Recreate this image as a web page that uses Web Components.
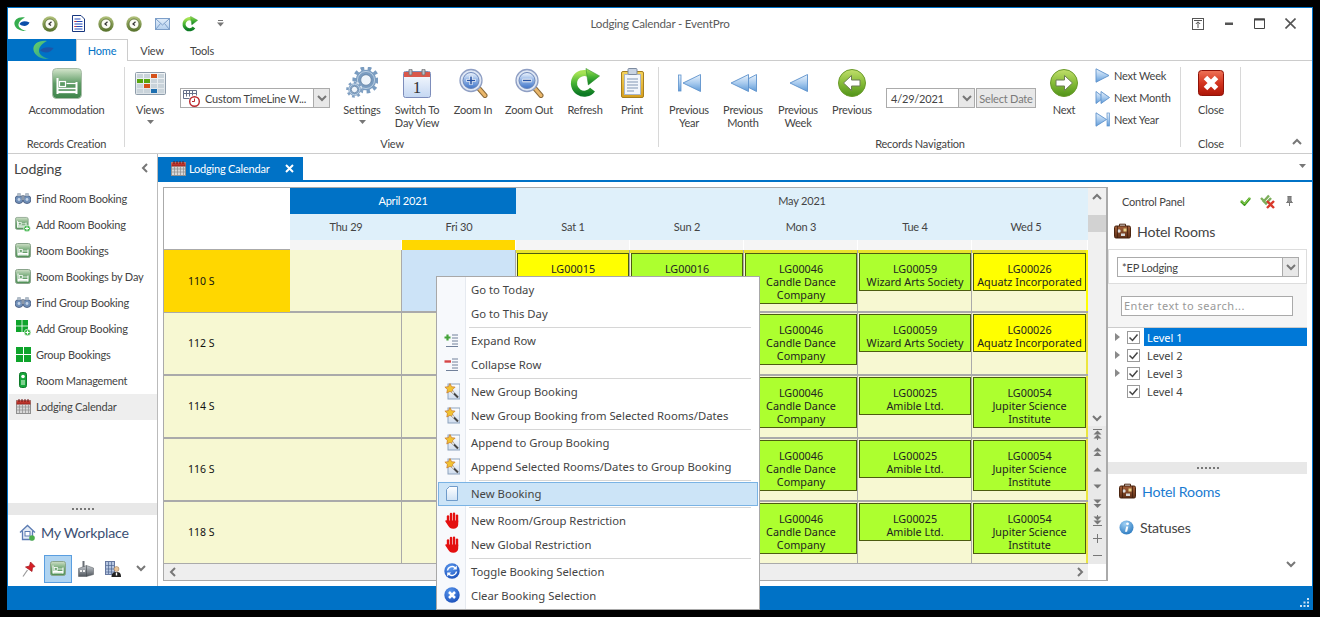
<!DOCTYPE html>
<html><head><meta charset="utf-8"><title>Lodging Calendar - EventPro</title>
<style>
html,body{margin:0;padding:0;background:#000;height:617px;overflow:hidden}
body{font:11px Lato,"Noto Sans",sans-serif;color:#444}
</style></head>
<body>
<ep-window>
  <ep-titlebar title-text="Lodging Calendar - EventPro"></ep-titlebar>
  <ep-tabs></ep-tabs>
  <ep-ribbon>
    <ep-group label="Records Creation" style="width:117px">
      <ep-rbtn icon="bed" label="Accommodation" style="width:117px"></ep-rbtn>
    </ep-group>
    <ep-group label="View" style="width:534px;padding-left:7px">
      <ep-rbtn icon="views" label="Views" arrow style="width:36px"></ep-rbtn>
      <ep-combo icon="timeline" style="width:150px;margin:21px 10px 0 12px">Custom TimeLine W...</ep-combo>
      <ep-rbtn icon="gears" label="Settings" arrow style="width:44px;margin-right:6px"></ep-rbtn>
      <ep-rbtn icon="cal1" label="Switch To|Day View" style="width:54px"></ep-rbtn>
      <ep-rbtn icon="zoomin" label="Zoom In" style="width:58px"></ep-rbtn>
      <ep-rbtn icon="zoomout" label="Zoom Out" style="width:54px"></ep-rbtn>
      <ep-rbtn icon="refresh" label="Refresh" style="width:58px"></ep-rbtn>
      <ep-rbtn icon="print" label="Print" style="width:36px"></ep-rbtn>
    </ep-group>
    <ep-group label="Records Navigation" style="width:522px;padding-left:10px">
      <ep-rbtn icon="prevyear" label="Previous|Year" style="width:40px"></ep-rbtn>
      <ep-rbtn icon="prevmonth" label="Previous|Month" style="width:68px"></ep-rbtn>
      <ep-rbtn icon="prevweek" label="Previous|Week" style="width:42px"></ep-rbtn>
      <ep-rbtn icon="prevgo" label="Previous" style="width:66px"></ep-rbtn>
      <ep-combo style="width:89px;margin:21px 1px 0 1px">4/29/2021</ep-combo>
      <ep-datebtn style="margin-top:21px">Select Date</ep-datebtn>
      <ep-rbtn icon="nextgo" label="Next" style="width:44px;margin-left:6px"></ep-rbtn>
      <ep-smallcol style="margin-left:9px">
        <ep-smallbtn icon="nextweek">Next Week</ep-smallbtn>
        <ep-smallbtn icon="nextmonth">Next Month</ep-smallbtn>
        <ep-smallbtn icon="nextyear">Next Year</ep-smallbtn>
      </ep-smallcol>
    </ep-group>
    <ep-group label="Close" style="width:60px">
      <ep-rbtn icon="closebig" label="Close" style="width:60px"></ep-rbtn>
    </ep-group>
  </ep-ribbon>
  <ep-body>
    <ep-sidebar>
      <ep-navitem icon="binoc">Find Room Booking</ep-navitem>
      <ep-navitem icon="bedplus">Add Room Booking</ep-navitem>
      <ep-navitem icon="bedsm">Room Bookings</ep-navitem>
      <ep-navitem icon="bedsm">Room Bookings by Day</ep-navitem>
      <ep-navitem icon="binoc">Find Group Booking</ep-navitem>
      <ep-navitem icon="gridplus">Add Group Booking</ep-navitem>
      <ep-navitem icon="grid">Group Bookings</ep-navitem>
      <ep-navitem icon="phone">Room Management</ep-navitem>
      <ep-navitem icon="calsm" active>Lodging Calendar</ep-navitem>
    </ep-sidebar>
    <ep-main>
      <ep-doctab>Lodging Calendar</ep-doctab>
      <ep-workspace>
        <ep-calendar></ep-calendar>
        <ep-panel></ep-panel>
      </ep-workspace>
    </ep-main>
  </ep-body>
  <ep-status></ep-status>
  <ep-menu>
    <ep-mitem>Go to Today</ep-mitem>
    <ep-mitem>Go to This Day</ep-mitem>
    <ep-msep></ep-msep>
    <ep-mitem icon="expand">Expand Row</ep-mitem>
    <ep-mitem icon="collapse">Collapse Row</ep-mitem>
    <ep-msep></ep-msep>
    <ep-mitem icon="wand">New Group Booking</ep-mitem>
    <ep-mitem icon="wand">New Group Booking from Selected Rooms/Dates</ep-mitem>
    <ep-msep></ep-msep>
    <ep-mitem icon="wand">Append to Group Booking</ep-mitem>
    <ep-mitem icon="wand">Append Selected Rooms/Dates to Group Booking</ep-mitem>
    <ep-msep></ep-msep>
    <ep-mitem icon="page" active>New Booking</ep-mitem>
    <ep-msep></ep-msep>
    <ep-mitem icon="hand">New Room/Group Restriction</ep-mitem>
    <ep-mitem icon="hand">New Global Restriction</ep-mitem>
    <ep-msep></ep-msep>
    <ep-mitem icon="toggle">Toggle Booking Selection</ep-mitem>
    <ep-mitem icon="clear">Clear Booking Selection</ep-mitem>
  </ep-menu>
</ep-window>
<script>
const lg=(id,a,b,c)=>`<defs><linearGradient id="${id}" x1="0" y1="0" x2="0" y2="1"><stop offset="0" stop-color="${a}"/>${c?`<stop offset=".5" stop-color="${c}"/>`:''}<stop offset="1" stop-color="${b}"/></linearGradient></defs>`;
const bedGlyph=`<path d="M5.500 10v16M24.500 14v12" stroke="#fff" stroke-width="2" fill="none"/><path d="M5.500 20.500h19" stroke="#fff" stroke-width="1.500"/><path d="M5.500 24h19" stroke="#fff" stroke-width="2.400"/><rect x="7.500" y="13.500" width="6" height="5" fill="none" stroke="#fff" stroke-width="1.200"/><path d="M14.500 15.500h10" stroke="#fff" stroke-width="1.200"/>`;
const tri=(pts,g='t')=>`<path d="${pts}" fill="url(#${g})" stroke="#5d92cc" stroke-width=".9" stroke-linejoin="round"/>`;
const triG=lg('t','#eaf3fc','#5f9bd8','#a9cbee');
const gear=(cx,cy,r,c,tw,hi)=>`<circle cx="${cx}" cy="${cy}" r="${r*1.22}" fill="none" stroke="${c}" stroke-width="${r*.42}" stroke-dasharray="${tw} ${tw}"/><circle cx="${cx}" cy="${cy}" r="${r*.82}" fill="none" stroke="${c}" stroke-width="${r*.52}"/><circle cx="${cx}" cy="${cy}" r="${r*.56}" fill="#eef4fa" stroke="#55779c" stroke-width=".8"/><circle cx="${cx}" cy="${cy}" r="${r*.9}" fill="none" stroke="${hi}" stroke-width=".8"/>`;
const clock=`${lg('c','#b4c47e','#55702a')}<circle cx="8" cy="8" r="7.700" fill="url(#c)"/><circle cx="8" cy="8" r="5" fill="#fbfbf4" stroke="#4e6322" stroke-width=".7"/><path d="M9.500 5.800 7 8l2 1.400" stroke="#333" stroke-width="1.200" fill="none"/>`;
const refresh=`${lg('r','#a6e354','#0d7a24','#46b334')}<path d="M24 23a11 11 0 1 1-4-16.500" fill="none" stroke="url(#r)" stroke-width="6.500"/><path d="M17 .5 31.500 8.500 19.500 18z" fill="url(#r)" stroke="#2b8b28" stroke-width=".6"/>`;
const mag=(inner)=>`${lg('m','#f0f6fd','#3f74c8','#8db0e4')}<path d="M20.500 20 27 27.500" stroke="#8a6a3a" stroke-width="5" stroke-linecap="round"/><path d="M20.500 20 27 27.500" stroke="#eab76b" stroke-width="3" stroke-linecap="round"/><circle cx="13" cy="12.500" r="11" fill="#dfe7f4" stroke="#8f9fc4" stroke-width="1.300"/><circle cx="13" cy="12.500" r="8" fill="url(#m)" stroke="#6d88bb"/>${inner}`;
const wand=`${lg('w','#ffffff','#cfdcee')}<rect x="4" y="1" width="12" height="15" fill="url(#w)" stroke="#8ea3bd"/><path d="M6 .5l1.600 3.200 3.500.4-2.500 2.500.6 3.500-3.200-1.700L2.800 10l.6-3.500L.9 4.100l3.500-.4z" fill="#f1c232" stroke="#c8772a" stroke-width=".7"/><path d="M8 8.500 14 14.500" stroke="#444" stroke-width="2"/><path d="M8 8.500 10 10.500" stroke="#ddd" stroke-width="2"/>`;
const sgrid=`<rect x="0" y="0" width="7" height="7" fill="#0ea42b"/><rect x="8" y="0" width="7" height="7" fill="#0ea42b"/><rect x="0" y="8" width="7" height="7" fill="#0ea42b"/><rect x="8" y="8" width="7" height="7" fill="#0ea42b"/>`;
const bedsm=`${lg('b','#cfe0c8','#4f8f55','#6fa673')}<rect x=".5" y=".5" width="15" height="14" rx="2" fill="url(#b)" stroke="#8aa48c"/><path d="M3 4.500v8M13 6.500v6M3 10.500h10" stroke="#fff" stroke-width="1.100" fill="none"/><path d="M3 11.800h10" stroke="#fff" stroke-width="1.300"/><rect x="4.300" y="6.500" width="3" height="2.800" fill="none" stroke="#fff" stroke-width=".8"/><path d="M7.500 8h5.500" stroke="#fff" stroke-width=".8"/>`;
const calsm=`${lg('k','#d94b3f','#9d1f1a')}<rect x=".5" y="1.500" width="14" height="13" fill="#d8d8d8" stroke="#8f8f8f"/><rect x=".5" y="1.500" width="14" height="4" fill="url(#k)"/><path d="M3 0v3M6 0v3M9 0v3M12 0v3" stroke="#6b1010"/><path d="M3.500 5v9M6.500 5v9M9.500 5v9M12.500 5v9M1 8h13M1 11h13" stroke="#8c8c8c" stroke-width=".7"/>`;
const plusDot=(x,y)=>`<circle cx="${x}" cy="${y}" r="3.300" fill="#3fb54a" stroke="#fff" stroke-width=".6"/><path d="M${x-2} ${y}h4M${x} ${y-2}v4" stroke="#fff" stroke-width="1.100"/>`;
const ICONS={
 logo:[17,16,`<path d="M12 1.500C6 0 .5 3.500 1.500 8.500 2.500 13 8 15.500 13.500 15 8 13.500 5 11 5.500 8c.5-3 3.500-5 6.500-6.500z" fill="#36ad4e"/><path d="M6.500 8C8.500 4.500 12.500 4.500 16.500 6.500 15 10 10.500 11.500 6.500 8z" fill="#0b4fa8"/>`],
 applogo:[22,20,`<defs><linearGradient id="a" x1="0" y1="0" x2="1" y2="1"><stop offset="0" stop-color="#6fd060"/><stop offset="1" stop-color="#1f9ea0"/></linearGradient></defs><path d="M15 1C7 0 .5 4 1.500 10 2.500 16 10 19.500 17 19 10 17 6.500 14 7 10c.5-4 4-7 8-9z" fill="url(#a)"/><path d="M8 10.500C11 7 16 6.500 21.500 8 19.500 12.500 13 14 8 10.500z" fill="#1c55a8"/>`],
 clock:[16,16,clock],
 doc:[13,17,`<path d="M.5.5h8.500L12.500 4v12.500H.5z" fill="#fff" stroke="#17367f"/><path d="M2.500 4h6M2.500 6.500h8M2.500 9h8M2.500 11.500h8M2.500 14h8" stroke="#2349b8"/><path d="M2.500 6.500h2M2.500 11.500h2" stroke="#d33"/>`],
 env:[15,12,`${lg('e','#e3eefa','#b5d0ee')}<rect x=".5" y=".5" width="14" height="11" fill="url(#e)" stroke="#7d9fc9"/><path d="M1 1l6.500 6L14 1M1 11l4.500-5.500M14 11 9.500 5.500" fill="none" stroke="#7d9fc9"/>`],
 refreshsm:[16,16,refresh,32,32],
 refresh:[30,30,refresh,32,32],
 bed:[30,31,`${lg('b','#d5e6cd','#3f854b','#5f9c66')}<rect x=".5" y=".5" width="29" height="30" rx="4" fill="url(#b)" stroke="#a8bda8"/>${bedGlyph}`],
 views:[31,23,`${lg('v','#f2f5f7','#dbe2e7')}<rect x=".5" y=".5" width="30" height="22" rx="1" fill="url(#v)" stroke="#8f9dab"/>`+[['#c9d3da','#c9d3da','#d5511a','#c9d3da'],['#58a50f','#58a50f','#c9d3da','#c9d3da'],['#c9d3da','#d5511a','#c9d3da','#c9d3da'],['#c9d3da','#c9d3da','#1e6fb0','#c9d3da']].map((r,y)=>r.map((c,x)=>`<rect x="${2+x*7}" y="${2+y*5}" width="6" height="4" fill="${c}"/>`).join('')).join('')],
 timeline:[17,17,`<path d="M.5.5h13M.5 3.500h13M.5.5v8h6M13.500.5v5M3.500.5v6M6.500.5v6M9.500.5v5" stroke="#66708a" fill="none"/><circle cx="11.500" cy="11.500" r="4.800" fill="#fff" stroke="#b9262b" stroke-width="1.400"/><path d="M11.500 8.500v3h-2.500" fill="none" stroke="#b9262b"/>`],
 gears:[32,32,`${gear(20,13,9.500,'#7a9cc0',3.500,'#c9daea')}<circle cx="8.500" cy="22.500" r="8" fill="#fff" opacity=".6"/>${gear(8.500,22.500,5.800,'#7f9fc2',2.700,'#c9daea')}`],
 cal1:[28,29,`${lg('k','#fafcff','#c4d7f2')}<rect x=".5" y="2.500" width="27" height="26" rx="2" fill="url(#k)" stroke="#7d8dbb"/><rect x="1" y="3" width="26" height="5" fill="#d9574b"/><rect x="6" y="0" width="3" height="6" rx="1" fill="#b9c0cc" stroke="#777"/><rect x="19" y="0" width="3" height="6" rx="1" fill="#b9c0cc" stroke="#777"/><text x="14" y="24" text-anchor="middle" font-family="Liberation Serif,serif" font-size="17" fill="#333">1</text>`],
 zoomin:[30,30,mag(`<path d="M13 8v9M8.500 12.500h9" stroke="#fff" stroke-width="3"/><path d="M13 8.500v8M9 12.500h8" stroke="#2a55a5" stroke-width="1.600"/>`)],
 zoomout:[30,30,mag(`<path d="M8.500 12.500h9" stroke="#fff" stroke-width="3.500"/><path d="M9 12.500h8" stroke="#2a55a5" stroke-width="1.600"/>`)],
 print:[23,30,`${lg('p','#f5d35b','#d69e1c')}<rect x=".5" y="3.500" width="22" height="26" rx="1.500" fill="url(#p)" stroke="#a57e20"/><rect x="3.500" y="6.500" width="16" height="20" fill="#f2f6fc" stroke="#aab5c8"/><path d="M6 11h11M6 14h11M6 17h11M6 20h11M6 23h7" stroke="#8095b3"/><rect x="7" y=".5" width="9" height="6" rx="1" fill="#c8d3e2" stroke="#7d8ba0"/>`],
 prevyear:[23,18,`${triG}<rect x=".5" y="1" width="2.500" height="16" fill="url(#t)" stroke="#5d92cc" stroke-width=".8"/>`+tri('M22.500.5 5 9l17.500 8.500z')],
 prevmonth:[27,18,`${triG}`+tri('M26.500.5 10 9l16.500 8.500z')+tri('M18.500.5 1 9l17.500 8.500z')],
 prevweek:[19,18,`${triG}`+tri('M18.500.5 1 9l17.500 8.500z')],
 prevgo:[28,28,`${lg('g','#c2df6c','#4f9218','#86bc38')}<circle cx="14" cy="14" r="13.500" fill="url(#g)" stroke="#6a9a2b"/><path d="M5.500 14 13.500 6.500V11h8.500v6h-8.500v4.500z" fill="#fff" stroke="#6d7d55"/>`],
 nextgo:[28,28,`${lg('g','#c2df6c','#4f9218','#86bc38')}<circle cx="14" cy="14" r="13.500" fill="url(#g)" stroke="#6a9a2b"/><path d="M22.500 14 14.500 6.500V11H6v6h8.500v4.500z" fill="#fff" stroke="#6d7d55"/>`],
 nextweek:[15,15,`${triG}`+tri('M1 .8 14 7.500 1 14.200z')],
 nextmonth:[15,15,`${triG}`+tri('M1 1.500 9 7.500 1 13.500z')+tri('M6 1.500 14.500 7.500 6 13.500z')],
 nextyear:[15,15,`${triG}`+tri('M1 .8 11.500 7.500 1 14.200z')+`<rect x="12" y="1" width="2.400" height="13" fill="url(#t)" stroke="#5d92cc" stroke-width=".7"/>`],
 closebig:[26,26,`${lg('x','#ee7357','#ac1507','#d43520')}<rect x=".5" y=".5" width="25" height="25" rx="3" fill="url(#x)" stroke="#8f1208"/><path d="M7.500 7.500l11 11M18.500 7.500l-11 11" stroke="#fff" stroke-width="5"/>`],
 binoc:[16,12,`<circle cx="4" cy="7.500" r="4" fill="#6f8fb8" stroke="#54688a"/><circle cx="12" cy="7.500" r="4" fill="#6f8fb8" stroke="#54688a"/><rect x="6.500" y="3" width="3" height="5" fill="#8c98a8"/><rect x="2" y="1" width="4" height="3" rx="1" fill="#b1bcc8"/><rect x="10" y="1" width="4" height="3" rx="1" fill="#b1bcc8"/><circle cx="4" cy="7.500" r="1.400" fill="#c4d4e8"/><circle cx="12" cy="7.500" r="1.400" fill="#c4d4e8"/>`],
 bedsm:[16,15,bedsm],
 bedplus:[16,16,`<g transform="translate(0 1) scale(.85)">${bedsm}</g>${plusDot(12,12.500)}`],
 grid:[15,15,sgrid],
 gridplus:[15,16,`<g transform="scale(.8)">${sgrid}</g>${plusDot(11.500,12.500)}`],
 phone:[8,16,`<rect x=".5" y=".5" width="7" height="15" rx="2" fill="#16a63a" stroke="#0f7a2a"/><circle cx="4" cy="4.500" r="1.800" fill="#fff"/><rect x="2" y="8" width="4" height="5" fill="#7ed08f"/>`],
 calsm:[15,15,calsm],
 home:[17,17,`<path d="M1 8.500 8.500 1.500 16 8.500M3.500 7v8.500h10V7" fill="#e4ecf7" stroke="#5c7cb2" stroke-width="1.300"/><rect x="6" y="7.500" width="5" height="4.500" fill="#fff" stroke="#5c7cb2"/><circle cx="13" cy="14" r="2.800" fill="#4cae4c"/>`],
 pin:[14,16,`<path d="M1 15.500 5.500 9" stroke="#999" stroke-width="1.200"/><path d="M8.500 1 13 5.500 10.500 6.500 10 10.500 3.500 6 7.500 5z" fill="#d81f26" stroke="#9c1218" stroke-width=".7"/>`],
 bedtool:[16,15,bedsm],
 factory:[16,16,`${lg('f','#c6cbd0','#4f555c')}<path d="M.5 15.500V7.500l8-3 7 2.500v6.500l-7 2z" fill="url(#f)" stroke="#50555b" stroke-width=".5"/><path d="M8.500 4.500v11" stroke="#3f444a" stroke-width=".6"/><rect x="4.500" y="0" width="2" height="6" fill="#6b7076"/><rect x="2" y="9" width="2" height="2" fill="#eee"/><rect x="5" y="9" width="2" height="2" fill="#eee"/>`],
 building:[16,16,`<rect x=".5" y=".5" width="9" height="13" fill="#b5c5e0" stroke="#6678a0"/><path d="M3.500 1v12M6.500 1v12M1 4.500h8M1 8h8M1 11h8" stroke="#4f6590" stroke-width=".7"/><circle cx="11.500" cy="8" r="2.500" fill="#e8c49a" stroke="#775533" stroke-width=".4"/><path d="M6.500 16c0-4 2-5 5-5s4.500 1 4.500 5z" fill="#222"/><path d="M10.800 11.500h1.400v3h-1.400z" fill="#fff"/>`],
 suitcase:[17,16,`${lg('s','#a5613a','#5c2e16')}<rect x=".5" y="3" width="16" height="12" rx="1.500" fill="url(#s)" stroke="#4a2510"/><path d="M5.500 3V1.200h6V3" fill="none" stroke="#4a2510"/><circle cx="5" cy="8" r="1.700" fill="#ddd"/><rect x="9.500" y="5.500" width="3" height="3" fill="#e8d48a"/><rect x="7" y="10.500" width="4" height="2.500" fill="#d8d8d8"/><path d="M3.500 3v12M13.500 3v12" stroke="#3a1b0a" stroke-width=".7"/>`],
 info:[15,15,`<defs><radialGradient id="i" cx=".4" cy=".25" r=".9"><stop offset="0" stop-color="#9fd0f4"/><stop offset="1" stop-color="#1a6db8"/></radialGradient></defs><circle cx="7.500" cy="7.500" r="7" fill="url(#i)"/><circle cx="8.500" cy="3.800" r="1.400" fill="#fff"/><path d="M7.200 6.500h2.100L8.100 11.800H6z" fill="#fff"/>`],
 check:[11,10,`<path d="M1 5l3.500 3.500L10 2" fill="none" stroke="#3f9b1e" stroke-width="2.600"/><path d="M1 4.500l3.500 3.500L10 1.500" fill="none" stroke="#a9de5f" stroke-width=".9"/>`],
 checkx:[16,15,`<path d="M1 4l3 3L9 1.500" fill="none" stroke="#7cae5a" stroke-width="2.400"/><path d="M3 6.500l3 3L11 4" fill="none" stroke="#7cae5a" stroke-width="2.400"/><path d="M7 7l7 7M14 7l-7 7" stroke="#d8392b" stroke-width="2.400"/>`],
 tack:[7,10,`<path d="M1.500.5h4M2 .5v4.500L.5 6.500h6L5 5V.5M3.500 6.500v3.500" fill="#8a8a8a" stroke="#777"/>`],
 expand:[15,14,`<path d="M8 2h6M8 5h6M8 8h6M8 11h6M2 13.500h12" stroke="#71809a"/><path d="M.5 4.500h6M3.500 1.500v6" stroke="#45a33a" stroke-width="2.200"/>`],
 collapse:[15,14,`<path d="M8 2h6M8 5h6M8 8h6M8 11h6M2 13.500h12" stroke="#71809a"/><path d="M.5 4.500h6.500" stroke="#d64545" stroke-width="2.400"/>`],
 wand:[16,17,wand],
 page:[12,15,`${lg('p','#ffffff','#cfe2f5')}<path d="M3.500.5h8v14H.5V3.500z" fill="url(#p)" stroke="#6f9bca"/>`],
 hand:[14,17,`<g stroke="#e41010" stroke-linecap="round" fill="none"><path d="M3 10V4.500" stroke-width="2.400"/><path d="M6 9V2" stroke-width="2.400"/><path d="M9 9V1.800" stroke-width="2.400"/><path d="M12 10V3.600" stroke-width="2.400"/></g><path d="M2 8.500h11.200v4c0 2.500-2 4.300-5 4.300-2.500 0-3.800-1-5-3L.4 9.500c-.4-1.200 1-1.800 1.600-1z" fill="#e41010"/>`],
 toggle:[16,16,`<defs><radialGradient id="o" cx=".4" cy=".3" r=".9"><stop offset="0" stop-color="#5d9bf0"/><stop offset="1" stop-color="#0b3fae"/></radialGradient></defs><circle cx="8" cy="8" r="7.700" fill="url(#o)"/><path d="M3.500 7.500A4.500 4.500 0 0 1 11 4.800M12.500 8.500A4.500 4.500 0 0 1 5 11.200" fill="none" stroke="#fff" stroke-width="1.500"/><path d="M12.800 2.500v4h-4zM3.200 13.500v-4h4z" fill="#fff"/>`],
 clear:[16,16,`<defs><radialGradient id="o" cx=".4" cy=".3" r=".9"><stop offset="0" stop-color="#5d9bf0"/><stop offset="1" stop-color="#0b3fae"/></radialGradient></defs><circle cx="8" cy="8" r="7.700" fill="url(#o)"/><path d="M5 5l6 6M11 5l-6 6" stroke="#fff" stroke-width="2.500"/>`],
 chevd:[10,7,`<path d="M1 1l4 4 4-4" fill="none" stroke="#777" stroke-width="2"/>`],
 chevu:[10,7,`<path d="M1 6l4-4 4 4" fill="none" stroke="#777" stroke-width="2"/>`],
 chevl:[7,10,`<path d="M6 1 2 5l4 4" fill="none" stroke="#777" stroke-width="2"/>`],
 chevr:[7,10,`<path d="M1 1l4 4-4 4" fill="none" stroke="#777" stroke-width="2"/>`],
 drop:[7,4,`<path d="M0 0h7L3.500 4z" fill="#777"/>`],
 qdrop:[7,7,`<path d="M1 .5h5" stroke="#777"/><path d="M0 2.500h7L3.500 6.500z" fill="#777"/>`],
 up2:[9,11,`<path d="M0 .5h9" stroke="#777"/><path d="M4.500 1.500 8.500 5.500h-8zM4.500 5.500 8.500 9.500h-8z" fill="#777"/><path d="M4.500 9v2" stroke="#777"/>`],
 up1:[9,10,`<path d="M4.500 .5 8.500 4.500h-8zM4.500 5 8.500 9h-8z" fill="#777"/>`],
 up0:[9,5,`<path d="M4.500 .5 8.500 4.500h-8z" fill="#777"/>`],
 dn0:[9,5,`<path d="M.5.5h8L4.500 4.500z" fill="#777"/>`],
 dn1:[9,10,`<path d="M.5.500h8L4.500 4.500zM.5 5h8L4.500 9z" fill="#777"/>`],
 dn2:[9,11,`<path d="M4.500 0v2" stroke="#777"/><path d="M.5 1.500h8L4.500 5.500zM.5 5.500h8L4.500 9.500z" fill="#777"/><path d="M0 10.500h9" stroke="#777"/>`],
 plus:[9,9,`<path d="M4.500 0v9M0 4.500h9" stroke="#777"/>`],
 minus:[9,9,`<path d="M0 4.500h9" stroke="#777"/>`],
 wrestore:[12,12,`<rect x=".5" y=".5" width="11" height="11" fill="none" stroke="#555"/><path d="M2 2.500h8M6 10V4M3.800 6 6 3.800 8.200 6" fill="none" stroke="#555"/>`],
 wmin:[8,3,`<rect width="8" height="2.500" y=".5" fill="#555"/>`],
 wmax:[11,11,`<path d="M.5 1h10v9.500H.5z" fill="none" stroke="#444"/><path d="M0 1.500h11" stroke="#444" stroke-width="2"/>`],
 wclose:[11,11,`<path d="M.5.5l10 10M10.500.5l-10 10" stroke="#555" stroke-width="1.600"/>`],
 tabx:[9,9,`<path d="M1 1l7 7M8 1 1 8" stroke="#fff" stroke-width="2"/>`],
 grip:[10,10,`<g fill="#cfe3f5"><rect x="7" y="0" width="2" height="2"/><rect x="3.500" y="3.500" width="2" height="2"/><rect x="7" y="3.500" width="2" height="2"/><rect x="0" y="7" width="2" height="2"/><rect x="3.500" y="7" width="2" height="2"/><rect x="7" y="7" width="2" height="2"/></g>`],
 expander:[5,8,`<path d="M0 0l5 4-5 4z" fill="#8a8a8a"/>`],
 checkbox:[13,13,`<rect x=".5" y=".5" width="12" height="12" fill="#fff" stroke="#9a9a9a"/><path d="M2.500 6.500 5.500 9.500 10.500 3.500" fill="none" stroke="#444" stroke-width="1.500"/>`],
};
const BASE=`*,:host{box-sizing:border-box}`;
const TAH=`"Noto Sans","Open Sans",sans-serif`;
function def(tag,css,render){
  customElements.define(tag,class extends HTMLElement{
    connectedCallback(){
      if(this.shadowRoot)return;
      const s=this.attachShadow({mode:'open'});
      s.innerHTML=`<style>${BASE}${css}</style>`+render(this);
    }
  });
}
const ic=(n,st='')=>`<ep-icon name="${n}"${st?` style="${st}"`:''}></ep-icon>`;
def('ep-icon',`:host{display:inline-flex;flex:none;line-height:0}svg{display:block}`,el=>{
  const d=ICONS[el.getAttribute('name')]||[1,1,''];
  const vw=d[3]||d[0],vh=d[4]||d[1];
  return `<svg xmlns="http://www.w3.org/2000/svg" width="${d[0]}" height="${d[1]}" viewBox="0 0 ${vw} ${vh}">${d[2]}</svg>`;
});
def('ep-window',`:host{position:absolute;left:7px;top:7px;width:1306px;height:603px;display:grid;grid-template-rows:31px 22px 93px 432px 24px;background:#fff;border:solid #0072c6;border-width:1px 1px 0 1px;font:11px Lato,"Noto Sans",sans-serif;letter-spacing:-.2px;color:#444}`,()=>`<slot></slot>`);
def('ep-titlebar',`:host{display:grid;grid-template-columns:1fr auto 1fr;align-items:center;background:#fff}
 .l,.r{display:flex;align-items:center}.l{padding-left:5px}.r{justify-content:flex-end;padding-right:6px}
 .t{color:#5a5a5a;font-size:11.600px}.b{width:31px;display:flex;justify-content:center}`,el=>`
 <div class="l">${ic('logo')}${ic('clock','margin-left:12px')}${ic('doc','margin-left:14px')}${ic('clock','margin-left:13px')}${ic('clock','margin-left:12px')}${ic('env','margin-left:13px')}${ic('refreshsm','margin-left:12px')}${ic('qdrop','margin-left:19px')}</div>
 <div class="t">${el.getAttribute('title-text')}</div>
 <div class="r"><span class="b">${ic('wrestore')}</span><span class="b">${ic('wmin')}</span><span class="b">${ic('wmax')}</span><span class="b">${ic('wclose')}</span></div>`);
def('ep-tabs',`:host{display:flex;height:22px;border-bottom:1px solid #ccc;background:#fff}
 .app{width:68px;height:22px;background:#0072c6;display:flex;align-items:center;justify-content:center;padding-left:2px}
 .t{height:22px;display:flex;align-items:center;justify-content:center;color:#444}
 .a{width:52px;background:#fff;border:1px solid #ccc;border-bottom:0;color:#0072c6}`,()=>`
 <div class="app">${ic('applogo')}</div><div class="t a">Home</div><div class="t" style="width:48px">View</div><div class="t" style="width:52px">Tools</div>`);
def('ep-ribbon',`:host{display:flex;height:93px;border-bottom:1px solid #ccc;background:#fff}
 .c{margin-left:auto;padding:77px 10px 0 0;display:flex;align-items:flex-start}`,()=>`<slot></slot><div class="c">${ic('chevu')}</div>`);
def('ep-group',`:host{display:flex;flex-direction:column;height:92px;background:linear-gradient(#d8d8d8,#d8d8d8) right 6px/1px 80px no-repeat;flex:none}
 .row{display:flex;height:76px;padding-top:6px}
 .lab{text-align:center;height:14px;line-height:14px;color:#444}`,el=>`<div class="row"><slot></slot></div><div class="lab" style="margin-left:-${parseInt(el.style.paddingLeft)||0}px">${el.getAttribute('label')}</div>`);
def('ep-rbtn',`:host{display:flex;flex-direction:column;align-items:center;flex:none;color:#444}
 .i{height:32px;display:flex;align-items:center;justify-content:center}
 .l{margin-top:4px;text-align:center;line-height:13px;white-space:nowrap}
 .a{margin-top:4px;display:flex}`,el=>`<div class="i">${ic(el.getAttribute('icon'))}</div><div class="l">${el.getAttribute('label').split('|').join('<br>')}</div>${el.hasAttribute('arrow')?`<div class="a">${ic('drop')}</div>`:''}`);
def('ep-combo',`:host{display:flex;height:20px;border:1px solid #ababab;background:#fff;align-items:center;flex:none;color:#444}
 .i{margin:0 5px 0 2px;display:flex}.t{flex:1;padding-left:4px;white-space:nowrap;overflow:hidden}.i + .t{padding-left:0}
 .b{width:16px;height:18px;background:#e8e8e8;border-left:1px solid #ababab;display:flex;align-items:center;justify-content:center}`,el=>`${el.getAttribute('icon')?`<span class="i">${ic(el.getAttribute('icon'))}</span>`:''}<div class="t"><slot></slot></div><div class="b">${ic('chevd')}</div>`);
def('ep-datebtn',`:host{display:flex;width:60px;height:20px;border:1px solid #ababab;background:#e8e8e8;align-items:center;justify-content:center;color:#7a7a7a;flex:none;white-space:nowrap}`,()=>`<slot></slot>`);
def('ep-smallcol',`:host{display:flex;flex-direction:column;margin-top:-3px;flex:none}`,()=>`<slot></slot>`);
def('ep-smallbtn',`:host{display:flex;height:22px;align-items:center;gap:4px;white-space:nowrap}`,el=>`${ic(el.getAttribute('icon'))}<slot></slot>`);
def('ep-body',`:host{display:flex;height:432px}`,()=>`<slot></slot>`);
def('ep-sidebar',`:host{display:flex;flex-direction:column;width:150px;height:432px;border-right:1px solid #bbb;background:#fff;flex:none}
 .h{height:32px;display:flex;align-items:center;justify-content:space-between;padding:0 8px 4px 6px;font-size:14.200px;color:#444}
 .s{margin-top:auto;height:12px;background:#e8e8e8;display:flex;align-items:center;justify-content:center;gap:2px}.s i{width:2px;height:2px;background:#777;display:block}
 .w{height:36px;display:flex;align-items:center;padding:0 0 2px 11px;gap:5px;font-size:14.200px;color:#3b4f73}
 .b{height:35px;display:flex;align-items:center;padding-left:14px}
 .b span{display:flex;align-items:center;justify-content:center;height:28px}
 .sel{background:#b0d4f1;border:1px solid #5a9ee0;width:28px}`,()=>`
 <div class="h">Lodging ${ic('chevl','margin-right:1px')}</div><slot></slot>
 <div class="s"><i></i><i></i><i></i><i></i><i></i><i></i></div>
 <div class="w">${ic('home')}My Workplace</div>
 <div class="b"><span style="width:14px;margin-right:8px">${ic('pin')}</span><span class="sel">${ic('bedtool')}</span><span style="width:16px;margin-left:6px">${ic('factory')}</span><span style="width:16px;margin-left:11px">${ic('building')}</span><span style="width:10px;margin-left:15px">${ic('chevd')}</span></div>`);
def('ep-navitem',`:host{display:flex;height:26px;flex:none;align-items:center;margin-left:1px;padding:0 0 2px 6px;white-space:nowrap;color:#444}
 :host([active]){background:#eee}
 .i{width:16px;display:flex;justify-content:center;margin-right:5px}`,el=>`<span class="i">${ic(el.getAttribute('icon'))}</span><slot></slot>`);
def('ep-main',`:host{display:flex;flex-direction:column;flex:1;min-width:0}`,()=>`<slot></slot>`);
def('ep-doctab',`:host{display:flex;height:28px;padding-top:3px;border-bottom:2px solid #0072c6}
 .t{width:145px;height:23px;background:#0072c6;color:#fff;display:flex;align-items:center;padding-left:13px;white-space:nowrap}
 .x{margin-left:auto;margin-right:9px;display:flex}.d{margin-left:auto;padding:7px 6px 0 0;display:flex;align-items:flex-start}`,()=>`<div class="t">${ic('calsm','margin-right:3px')}<slot></slot><span class="x">${ic('tabx')}</span></div><div class="d">${ic('drop')}</div>`);
def('ep-workspace',`:host{display:flex;height:404px}`,()=>`<slot></slot>`);
const ROWS=[
 ['110 S',[['y','LG00015'],['g','LG00016'],['g','LG00046','Candle Dance Company'],['g','LG00059','Wizard Arts Society'],['y','LG00026','Aquatz Incorporated']]],
 ['112 S',[null,null,['g','LG00046','Candle Dance Company'],['g','LG00059','Wizard Arts Society'],['y','LG00026','Aquatz Incorporated']]],
 ['114 S',[null,null,['g','LG00046','Candle Dance Company'],['g','LG00025','Amible Ltd.'],['g','LG00054','Jupiter Science Institute']]],
 ['116 S',[null,null,['g','LG00046','Candle Dance Company'],['g','LG00025','Amible Ltd.'],['g','LG00054','Jupiter Science Institute']]],
 ['118 S',[null,null,['g','LG00046','Candle Dance Company'],['g','LG00025','Amible Ltd.'],['g','LG00054','Jupiter Science Institute']]],
];
const COLS='112px 114px 114px 114px 114px 114px 116px';
def('ep-booking',`:host{display:block;border:1px solid #4c5c10;background:#adff2f;margin:0 0 0 1px;padding:7.500px 2px 2.500px;text-align:center;color:#222;font:10.800px/13px ${TAH};letter-spacing:0}
 :host([kind=y]){background:#ff0}`,()=>`<slot></slot>`);
def('ep-calendar',`:host{display:grid;grid-template-columns:126px 798px 18px;grid-template-rows:62px 314px 16px;width:945px;height:394px;margin:5px 0 0 5px;border:solid #aaa;border-width:1px 2px 1px 1px;background:#fff;flex:none}
 .corner{border-bottom:1px solid #aaa;background:#fff}
 .head{display:grid;grid-template-columns:${COLS};grid-template-rows:26px 26px 10px}
 .m{display:flex;align-items:center;justify-content:center;padding-bottom:2px}
 .apr{grid-column:1/3;background:#0072c6;color:#fff}.may{grid-column:3/8;background:#dff0fa;color:#444}
 .d{background:#dff0fa;display:flex;align-items:center;justify-content:center;color:#444;padding-bottom:2px}
 .s{background:#f5f5f5;border-right:1px solid #fff}.s.on{background:#ffd700}
 .vs{grid-row:1/3;grid-column:3;background:#f0f0f0;display:flex;flex-direction:column;align-items:center}
 .vs span{display:flex;align-items:center;justify-content:center;width:100%}
 .gut{display:flex;flex-direction:column;overflow:hidden}
 .gr{height:63px;flex:none;background:#f7f8d2;border-bottom:2px solid #aaa;display:flex;align-items:center;padding:0 0 2px 24px;color:#111;font:10.500px ${TAH};letter-spacing:0}
 .gr.on{background:#ffd700;border-bottom:1px solid #aaa;padding-bottom:0}
 .rows{display:flex;flex-direction:column;overflow:hidden}
 .r{height:63px;flex:none;display:grid;grid-template-columns:${COLS};border-bottom:2px solid #aaa}
 .c{background:#f7f8d2;border-right:1px solid #aaa;padding-top:1px;overflow:hidden}
 .c:last-child{border-right:2px solid #ece63e}
 .r.first .c.b{padding-top:3px;background:linear-gradient(#e8e22c 3px,#f7f8d2 3px)}
 .r.first .c:last-child{border-right-color:#ff0}
 .c.sel{background:#cce3f7}
 .hs{grid-column:1/3;background:#eee;display:flex;align-items:center;justify-content:space-between;padding:0 4px 0 5px}
 .cn{background:#fff}`,()=>{
  const days=['Thu 29','Fri 30','Sat 1','Sun 2','Mon 3','Tue 4','Wed 5'];
  const head=`<div class="m apr">April 2021</div><div class="m may">May 2021</div>`+
   days.map((d,i)=>`<div class="d"${i==6?' style="padding-right:8px"':''}>${d}</div>`).join('')+
   days.map((d,i)=>`<div class="s${i==1?' on':''}"></div>`).join('');
  const gut=ROWS.map((r,i)=>`<div class="gr${i==0?' on':''}">${r[0]}</div>`).join('');
  const rows=ROWS.map((r,i)=>`<div class="r${i==0?' first':''}"><div class="c"></div><div class="c${i==0?' sel':''}"></div>`+
    r[1].map(b=>`<div class="c b">${b?`<ep-booking kind="${b[0]}">${b[1]}${b[2]?'<br>'+b[2]:'<br><br>'}</ep-booking>`:''}</div>`).join('')+`</div>`).join('');
  const v=['up2','up1','up0','dn0','dn1','dn2','plus','minus'].map(n=>`<span style="height:17.250px">${ic(n)}</span>`).join('');
  return `<div class="corner"></div><div class="head">${head}</div>
   <div class="vs"><span style="height:17px">${ic('chevu')}</span><span style="height:10px;flex:none"></span><span style="height:17px;background:#d2d2d2;flex:none"></span><span style="height:178px;flex:none"></span><span style="height:16px">${ic('chevd')}</span><div style="flex:1;width:100%;background:#e9e9e9">${v}</div></div>
   <div class="gut">${gut}</div><div class="rows">${rows}</div>
   <div class="hs">${ic('chevl')}${ic('chevr')}</div><div class="cn"></div>`;
 });
def('ep-panel',`:host{display:flex;flex-direction:column;width:204px;height:404px;padding:8px 5px 0 0;background:#fff;flex:none;color:#444}
 .cp{height:24px;flex:none;display:flex;align-items:center;padding:0 0 2px 14px}
 .tt{margin-top:6px;height:24px;flex:none;display:flex;align-items:center;padding:0 0 2px 6px;gap:6px;font-size:14.200px;color:#444}
 .cb{margin-top:5px;height:35px;border:1px solid #ddd;padding:7px 8px;display:flex;flex:none}
 .se{height:44px;flex:none;background:#f5f5f5;border-bottom:1px solid #ccc;padding:12px 14px 0 13px}
 .in{height:20px;border:1px solid #aaa;background:#fff;color:#999;padding-left:2px;line-height:18px;font-family:${TAH};font-size:11px;letter-spacing:.5px;white-space:nowrap;overflow:hidden}
 .tr{height:18px;flex:none;display:flex;align-items:center;padding-left:7px;font:11px ${TAH};letter-spacing:0}
 .tr .e{width:5px;margin-right:7px;display:flex}
 .tr .l{margin-left:4px;padding:1px 0 0 3px;flex:1;height:18px;line-height:18px}
 .tr .on{background:#0078d7;color:#fff}
 .sp{margin-top:auto;height:12px;flex:none;background:#e8e8e8;display:flex;align-items:center;justify-content:center;gap:2px}.sp i{width:2px;height:2px;background:#777;display:block}
 .nv{height:36px;flex:none;display:flex;align-items:center;font-size:14.200px;padding:0 0 2px 11px;gap:6px}
 .bl{color:#1a7bd1}
 .ch{height:40px;flex:none;display:flex;align-items:center;justify-content:flex-end;padding:0 11px 3px 0}`,()=>{
  const tr=(n,ex,on)=>`<div class="tr"><span class="e">${ex?ic('expander'):''}</span>${ic('checkbox')}<div class="l${on?' on':''}">${n}</div></div>`;
  return `<div class="cp">Control Panel${ic('check','margin-left:auto')}${ic('checkx','margin-left:9px')}${ic('tack','margin-left:10px;margin-right:14px')}</div>
  <div class="tt">${ic('suitcase')}Hotel Rooms</div>
  <div class="cb"><ep-combo style="width:182px">*EP Lodging</ep-combo></div>
  <div class="se"><div class="in">Enter text to search...</div></div>
  ${tr('Level 1',1,1)}${tr('Level 2',1)}${tr('Level 3',1)}${tr('Level 4',0)}
  <div class="sp"><i></i><i></i><i></i><i></i><i></i><i></i></div>
  <div class="nv bl">${ic('suitcase')}Hotel Rooms</div>
  <div class="nv">${ic('info')}Statuses</div>
  <div class="ch">${ic('chevd')}</div>`;
 });
def('ep-status',`:host{display:flex;height:24px;background:#0072c6;justify-content:flex-end;align-items:flex-end;padding:0 2px 2px 0}`,()=>ic('grip'));
def('ep-menu',`:host{position:absolute;left:428px;top:268px;width:324px;height:334px;display:block;border:1px solid #a8a8a8;padding:1px;background:linear-gradient(90deg,#f7f9fc 28px,#e6eaf0 28px,#e6eaf0 29px,#fff 29px);z-index:5;font:11.300px ${TAH};letter-spacing:0;color:#444}`,()=>`<slot></slot>`);
def('ep-mitem',`:host{display:flex;height:24px;align-items:center;white-space:nowrap;color:#444;padding-bottom:2px}
 :host([active]){background:#cce4f7;box-shadow:inset 0 0 0 1px #7ab3e4}
 .i{width:27px;display:flex;justify-content:center;margin-right:6px}`,el=>`<span class="i">${el.getAttribute('icon')?ic(el.getAttribute('icon')):''}</span><slot></slot>`);
def('ep-msep',`:host{display:block;height:3px;padding:1px 7px 1px 31px}div{height:1px;background:#d6d6d6}`,()=>`<div></div>`);
</script>
</body></html>
